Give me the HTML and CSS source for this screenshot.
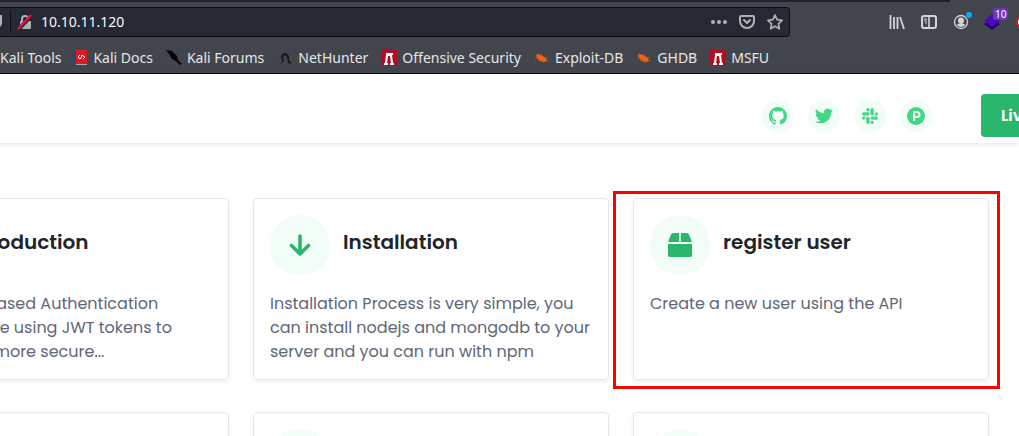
FILE: index.html
```html
<!DOCTYPE html>
<html lang="en">
<head>
<meta charset="utf-8">
<title>Documentation</title>
<link rel="stylesheet" href="styles.css">
</head>
<body>
<svg class="defs" aria-hidden="true">
  <symbol id="bug" viewBox="0 0 16 14"><path d="M2 4 4 3 7 4l5 3 1 3-3 1-4-1-3-3z" fill="#ef6413"/><path d="M5 4 3 2M8 5V3M11 7l3-1M12 9l3 1M9 10l1 2M6 9l-2 1M4 7 1 8" stroke="#b85a2a" stroke-width=".7" fill="none"/></symbol>
  <symbol id="msf" viewBox="0 0 16 16"><path d="M0 0h16v16H0z" fill="#b00d23"/><path d="M5 3h7v2h-1l1 8h1v2H9v-2h1L9 6H7l-1 7h1v2H3v-2h1l1-8z" fill="#fff"/></symbol>
</svg>
<header class="browser">
  <div class="tabs"></div>
  <div class="toolbar">
    <div class="address">
      <svg class="shield" width="3" height="14" viewBox="0 0 3 14"><path d="M0 0h2v7c0 3-1 4-2 5z" fill="#b1b1b5"/></svg>
      <span class="divider"></span>
      <svg width="16" height="18" viewBox="0 0 16 18"><path d="M5 8V6a3 3 0 0 1 6 0v2" fill="none" stroke="#b1b1b5" stroke-width="2"/><rect x="3" y="8" width="11" height="8" rx="1" fill="#b1b1b5"/><path d="M2 16 14 3" stroke="#262833" stroke-width="4"/><path d="M1 16 14 2" stroke="#f50f43" stroke-width="2"/></svg>
      <input class="url" type="text" value="10.10.11.120" aria-label="Address">
      <button class="tool" aria-label="Page actions"><svg width="18" height="18" viewBox="0 0 18 18" fill="#b1b1b5"><circle cx="3" cy="9" r="2"/><circle cx="9" cy="9" r="2"/><circle cx="15" cy="9" r="2"/></svg></button>
      <button class="tool" aria-label="Save to Pocket"><svg width="18" height="18" viewBox="0 0 18 18" fill="none" stroke="#b1b1b5" stroke-width="2" stroke-linejoin="round" stroke-linecap="round"><path d="M3 3h12q1 0 1 1v4a7 7 0 0 1-14 0V4q0-1 1-1z"/><path d="m6 7 3 3 3-3"/></svg></button>
      <button class="tool" aria-label="Bookmark this page"><svg width="18" height="18" viewBox="0 0 18 18" fill="none" stroke="#b1b1b5" stroke-width="1.7" stroke-linejoin="round"><path d="m9 2 2.1 4.700 5 .6-3.700 3.500 1 5L9 13.300l-4.400 2.500 1-5L1.900 7.300l5-.6z"/></svg></button>
    </div>
    <nav class="tools">
      <button class="tool" aria-label="Library"><svg width="16" height="16" viewBox="0 0 16 16" stroke="#d4d4d6" stroke-width="1.8"><path d="M1.500 1v14M5 3v12M8.500 3v12M11 3l4 12"/></svg></button>
      <button class="tool" aria-label="Sidebars"><svg width="16" height="16" viewBox="0 0 16 16" fill="none" stroke="#d4d4d6"><rect x="1" y="2" width="14" height="12" rx="2" stroke-width="2"/><path d="M8 2v12" stroke-width="1.600"/><path d="M3 5h3M3 7h3M4 9h2"/></svg></button>
      <button class="tool" aria-label="Account"><svg width="20" height="20" viewBox="0 0 20 20"><circle cx="8" cy="10" r="6.500" fill="none" stroke="#d4d4d6" stroke-width="1.300"/><circle cx="8" cy="8.500" r="3" fill="#d4d4d6"/><path d="M3.500 13q4.500-4 9 0-4.500 4-9 0" fill="#d4d4d6"/><circle cx="16" cy="3" r="3" fill="#00b0f4"/></svg></button>
      <button class="tool wallet" aria-label="Extension"><svg width="18" height="18" viewBox="0 0 18 18"><path d="m1 11 8-5 8 5-8 6z" fill="#230078"/><path d="m1 8 8-7 8 7-8 6z" fill="#4a09b4"/></svg><span class="count">10</span></button>
      <svg class="edge" width="3" height="14" viewBox="0 0 3 14"><circle cx="7" cy="7" r="6" fill="#fff" stroke="#d81920" stroke-width="2"/></svg>
    </nav>
  </div>
  <nav class="bookmarks">
    <a href="#">Kali Tools</a>
    <a href="#"><svg width="14" height="16" viewBox="0 0 14 16"><path d="M1 0h12v14H1z" fill="#db1b20"/><path d="M0 1h2v14H0z" fill="#264477"/><path d="M2 14h11v1H2z" fill="#aaa"/><path d="M6 5 4 7l2 2 1-1 1-3 1 1 2 1-2 2" fill="none" stroke="#fff"/></svg>Kali Docs</a>
    <a href="#"><svg width="16" height="16" viewBox="0 0 16 16"><path d="m0 0 6 1 5 5 1 4 4 4-2 1-4-4-4-2-3-5z" fill="#050505"/></svg>Kali Forums</a>
    <a href="#"><svg width="16" height="16" viewBox="0 0 16 16"><path d="M1 14q4-1 4-3L4 6q2-4 5-3 4 2 3 7l3 4-4-1-1-6-3-2-1 3 1 3-2 2z" fill="#17181b"/></svg>NetHunter</a>
    <a href="#"><svg width="16" height="16"><use href="#msf"/></svg>Offensive Security</a>
    <a href="#"><svg width="16" height="14"><use href="#bug"/></svg>Exploit-DB</a>
    <a href="#"><svg width="16" height="14"><use href="#bug"/></svg>GHDB</a>
    <a href="#"><svg width="16" height="16"><use href="#msf"/></svg>MSFU</a>
  </nav>
</header>
<div class="site-header">
  <nav class="social">
    <a href="#" aria-label="GitHub"><svg width="18" height="18" viewBox="0 0 16 16"><path d="M8 0C3.580 0 0 3.580 0 8c0 3.540 2.290 6.530 5.470 7.590.4.070.55-.17.55-.38 0-.19-.01-.82-.01-1.490-2.010.37-2.530-.49-2.690-.94-.09-.23-.48-.94-.82-1.130-.28-.15-.68-.52-.01-.53.63-.01 1.080.58 1.230.82.72 1.210 1.870.87 2.330.66.070-.52.28-.87.51-1.070-1.780-.2-3.640-.89-3.640-3.950 0-.87.31-1.590.82-2.150-.08-.2-.36-1.020.08-2.120 0 0 .67-.21 2.200.82.64-.18 1.320-.27 2-.27s1.360.09 2 .27c1.530-1.040 2.200-.82 2.200-.82.44 1.100.16 1.920.08 2.120.51.56.82 1.270.82 2.150 0 3.070-1.870 3.750-3.650 3.950.29.25.54.73.54 1.480 0 1.070-.01 1.930-.01 2.200 0 .21.15.46.55.38A8 8 0 0 0 16 8c0-4.420-3.580-8-8-8z"/></svg></a>
    <a href="#" aria-label="Twitter"><svg width="18" height="18" viewBox="0 0 24 24"><path d="M23.950 4.570a10 10 0 0 1-2.820.77 4.960 4.960 0 0 0 2.160-2.720 10 10 0 0 1-3.130 1.190 4.920 4.920 0 0 0-8.380 4.480A13.900 13.900 0 0 1 1.640 3.160a4.920 4.920 0 0 0 1.520 6.570 4.900 4.900 0 0 1-2.230-.61v.06a4.920 4.920 0 0 0 3.950 4.830 5 5 0 0 1-2.210.08 4.940 4.940 0 0 0 4.600 3.420A9.870 9.870 0 0 1 0 19.540a14 14 0 0 0 7.550 2.210c9.050 0 14-7.500 14-13.980l-.02-.64a9.900 9.900 0 0 0 2.420-2.560z"/></svg></a>
    <a href="#" aria-label="Slack"><svg width="16" height="16" viewBox="0 0 24 24"><path d="M5.040 15.170a2.520 2.520 0 1 1-2.520-2.520h2.520zm1.270 0a2.520 2.520 0 0 1 5.040 0v6.310a2.520 2.520 0 0 1-5.040 0zM8.830 5.040a2.520 2.520 0 1 1 2.520-2.520v2.520zm0 1.270a2.520 2.520 0 0 1 0 5.040H2.520a2.520 2.520 0 0 1 0-5.040zM18.960 8.830a2.520 2.520 0 1 1 2.520 2.520h-2.520zm-1.270 0a2.520 2.520 0 0 1-5.040 0V2.520a2.520 2.520 0 0 1 5.040 0zM15.170 18.960a2.520 2.520 0 1 1-2.520 2.520v-2.520zm0-1.270a2.520 2.520 0 0 1 0-5.040h6.310a2.520 2.520 0 0 1 0 5.040z"/></svg></a>
    <a href="#" aria-label="Product Hunt"><svg width="18" height="18" viewBox="0 0 18 18"><path fill-rule="evenodd" d="M9 0a9 9 0 1 0 0 18A9 9 0 0 0 9 0zM6 4h4a3.500 3.500 0 0 1 0 7H8v3H6zm2 2v3h2a1.500 1.500 0 0 0 0-3z"/></svg></a>
  </nav>
  <button class="live">Liv</button>
</div>
<main class="cards">
  <article class="card">
    <div class="head"><span class="icon"></span><h2>Introduction</h2></div>
    <p>This is a API based Authentication<br>system. we are using JWT tokens to<br>make things more secure...</p>
  </article>
  <article class="card">
    <div class="head"><span class="icon"><svg width="24" height="24" viewBox="0 0 24 24"><path d="M12 3v18M3.500 12.500 12 21l8.500-8.500" fill="none" stroke="#2bb76b" stroke-width="3.600" stroke-linecap="round" stroke-linejoin="round"/></svg></span><h2>Installation</h2></div>
    <p>Installation Process is very simple, you can install nodejs and mongodb to your server and you can run with npm</p>
  </article>
  <article class="card marked">
    <div class="head"><span class="icon"><svg width="24" height="24" viewBox="0 0 24 24" fill="#2bb76b"><path d="M5 0h6.200v9H0l3-7.500Q3.600 0 5 0zM12.800 0H19q1.400 0 2 1.500L24 9H12.800zM0 11h24v11q0 2-2 2H2q-2 0-2-2z"/></svg></span><h2>register user</h2></div>
    <p>Create a new user using the API</p>
  </article>
  <article class="card"></article>
  <article class="card"><div class="head"><span class="icon"></span></div></article>
  <article class="card"><div class="head"><span class="icon"></span></div></article>
</main>
</body>
</html>
```
FILE: styles.css
```css
* { box-sizing: border-box; }
html, body { height: 100%; }
body {
  margin: 0;
  overflow: hidden;
  background: #fff;
  color: #5d6778;
  font: 16px/24px Poppins, Inter, sans-serif;
}
svg { display: block; flex: none; }
a { color: inherit; text-decoration: none; }
button { border: 0; padding: 0; background: none; font: inherit; }
.defs { display: none; }

.browser {
  background: #42454c;
  border-bottom: 1px solid #08080a;
  color: #e6e6e8;
  font: 14px/20px "Noto Sans", sans-serif;
}
.tabs { height: 2px; margin-right: 69px; background: #22232e; }
.toolbar { display: flex; align-items: center; padding-top: 5px; }
.address {
  display: flex;
  flex: 1;
  align-items: center;
  gap: 10px;
  height: 30px;
  padding-right: 5px;
  background: #262833;
  border: 1px solid #0d0e12;
  border-left: 0;
  border-radius: 0 4px 4px 0;
}
.shield { margin-right: -3px; }
.divider { width: 1px; height: 22px; background: #0d0e12; margin-right: -4px; }
.url {
  flex: 1;
  min-width: 0;
  margin-left: -2px;
  padding: 0;
  border: 0;
  background: none;
  color: #f9f9fa;
  font: inherit;
}
.tool { position: relative; }
.tools {
  display: flex;
  align-items: center;
  justify-content: flex-end;
  gap: 16px;
  width: 229px;
}
.edge { margin-left: -1px; }
.wallet { margin-left: -6px; }
.count {
  position: absolute;
  top: -5px;
  left: 10px;
  padding: 0 2px;
  border-radius: 2px;
  background: #6b37bd;
  color: #fff;
  font-size: 10px;
  line-height: 12px;
}
.bookmarks { display: flex; gap: 13px; padding: 11px 0 5px; white-space: nowrap; }
.bookmarks a { display: flex; align-items: center; gap: 5px; }

.site-header {
  display: flex;
  align-items: center;
  justify-content: flex-end;
  gap: 49px;
  padding: 20px 0 6px;
  margin-left: -10px;
  box-shadow: 0 1px 5px rgba(0, 0, 0, .12);
}
.social { display: flex; gap: 14px; }
.social a {
  display: grid;
  place-items: center;
  width: 32px;
  height: 32px;
  border-radius: 50%;
  background: #f3fdf7;
  fill: #40d885;
}
.live {
  width: 38px;
  height: 43px;
  padding-left: 20px;
  overflow: hidden;
  border-radius: 4px 0 0 4px;
  background: #2bb76b;
  color: #fff;
  font-weight: 600;
  text-align: left;
}

.cards {
  display: grid;
  grid-template-columns: repeat(3, 1fr);
  gap: 32px 24px;
  margin: 55px 30px 0 -127px;
}
.card {
  position: relative;
  min-height: 182px;
  padding: 16px 16px 15px;
  border: 1px solid #e6e7ea;
  border-radius: 4px;
  box-shadow: 0 2px 4px rgba(0, 0, 0, .06);
}
.head { display: flex; align-items: center; gap: 13px; min-height: 60px; }
.icon {
  display: grid;
  place-items: center;
  width: 60px;
  height: 60px;
  border-radius: 50%;
  background: #f3fdf7;
}
h2 { margin: 0 0 6px; color: #212529; font-size: 20px; line-height: 24px; font-weight: 600; }
p { margin: 17px 0 0; }
.marked::after {
  content: "";
  position: absolute;
  inset: -8px -12px -10px -21px;
  border: 3px solid #f00;
}
```
